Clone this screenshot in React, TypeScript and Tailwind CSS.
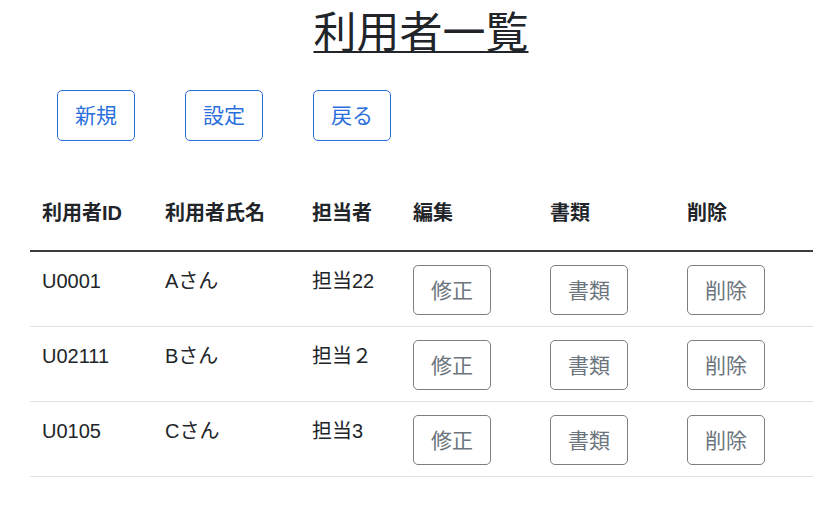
const users = [
  { id: "U0001", name: "Aさん", staff: "担当22" },
  { id: "U02111", name: "Bさん", staff: "担当２" },
  { id: "U0105", name: "Cさん", staff: "担当3" },
]

const font = "font-['Liberation_Sans','Noto_Sans_CJK_JP',sans-serif]"
const cols = "grid grid-cols-[123px_147px_101px_137px_137px_138px]"

function TopButton({ label }: { label: string }) {
  return (
    <button className="h-[51px] w-[78px] rounded-[5px] border border-[#2b6fdc] text-[21px] leading-none text-[#2b6fdc]">
      {label}
    </button>
  )
}

function RowButton({ label }: { label: string }) {
  return (
    <button className="h-[50px] w-[78px] rounded-[5px] border border-[#7a7f85] text-[21px] leading-none text-[#6c757d]">
      {label}
    </button>
  )
}

export default function App() {
  return (
    <div className={`h-[526px] w-[836px] bg-white text-[#212529] ${font}`}>
      <h1 className="mt-[7px] pl-[6px] text-center text-[43px] leading-[52px] text-[#212529] underline decoration-2 underline-offset-[3px]">
        利用者一覧
      </h1>

      <div className="mt-[31px] flex gap-[50px] pl-[57px]">
        <TopButton label="新規" />
        <TopButton label="設定" />
        <TopButton label="戻る" />
      </div>

      <div className="ml-[30px] mt-[42px] w-[783px]">
        <div className={`${cols} border-b-2 border-[#3c3c3c] text-[20px] font-bold leading-[30px]`}>
          {["利用者ID", "利用者氏名", "担当者", "編集", "書類", "削除"].map((h) => (
            <div key={h} className="px-[12px] pt-[15px] pb-[22px]">
              {h}
            </div>
          ))}
        </div>

        {users.map((u) => (
          <div key={u.id} className={`${cols} border-b border-[#dee2e6] text-[20px] leading-[30px]`}>
            <div className="px-[12px] pt-[14px]">{u.id}</div>
            <div className="px-[12px] pt-[14px]">{u.name}</div>
            <div className="px-[12px] pt-[14px]">{u.staff}</div>
            <div className="px-[12px] pt-[13px] pb-[11px]">
              <RowButton label="修正" />
            </div>
            <div className="px-[12px] pt-[13px] pb-[11px]">
              <RowButton label="書類" />
            </div>
            <div className="px-[12px] pt-[13px] pb-[11px]">
              <RowButton label="削除" />
            </div>
          </div>
        ))}
      </div>
    </div>
  )
}
